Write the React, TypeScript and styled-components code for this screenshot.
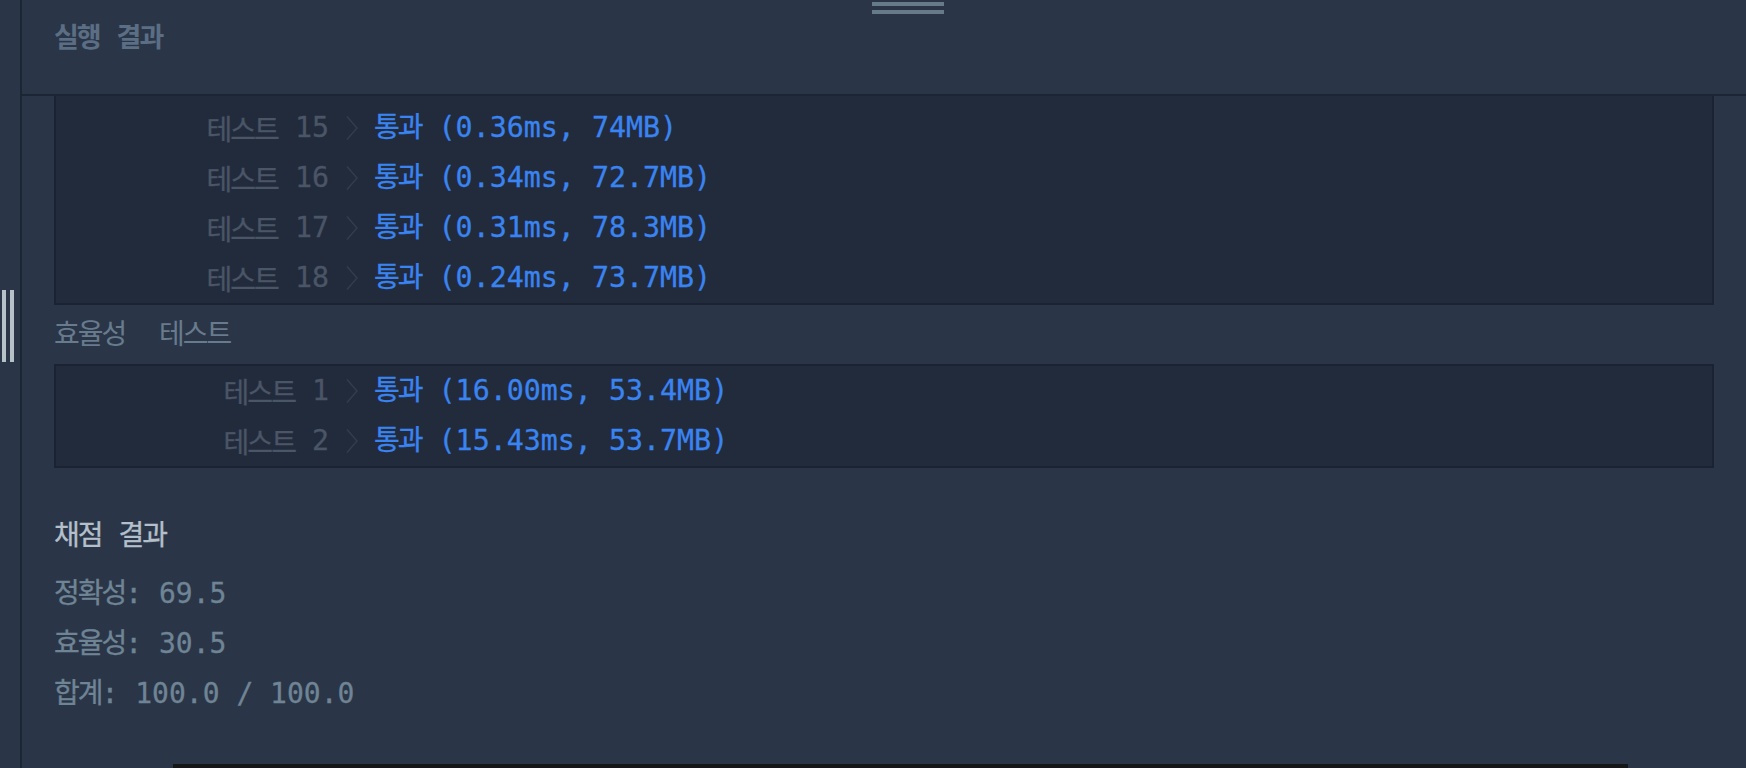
import React from 'react';
import styled, { createGlobalStyle } from 'styled-components';

const GlobalStyle = createGlobalStyle`
  html, body {
    margin: 0;
    padding: 0;
    background: #2a3647;
    overflow: hidden;
  }

  #root {
    height: 768px;
  }
`;

const MONO = `'DejaVu Sans Mono', 'Noto Sans CJK KR', monospace`;

interface TestRun {
  no: number;
  time: string;
  memory: string;
}

const accuracyRuns: TestRun[] = [
  { no: 15, time: '0.36ms', memory: '74MB' },
  { no: 16, time: '0.34ms', memory: '72.7MB' },
  { no: 17, time: '0.31ms', memory: '78.3MB' },
  { no: 18, time: '0.24ms', memory: '73.7MB' }
];

const efficiencyRuns: TestRun[] = [
  { no: 1, time: '16.00ms', memory: '53.4MB' },
  { no: 2, time: '15.43ms', memory: '53.7MB' }
];

const scores = [
  { label: '정확성', value: '69.5' },
  { label: '효율성', value: '30.5' },
  { label: '합계', value: '100.0 / 100.0' }
];

const Layout = styled.div`
  display: flex;
  height: 768px;
  overflow: hidden;
`;

const SideStrip = styled.div`
  width: 20px;
  flex: 0 0 20px;
  border-right: 2px solid #1c2534;
  background: #2a3647;
  display: flex;
  flex-direction: column;
  padding-top: 290px;
  box-sizing: content-box;
`;

const SideGrip = styled.div`
  display: flex;
  gap: 4px;
  margin-left: 2px;

  span {
    width: 4px;
    height: 72px;
    background: #b7c2c8;
  }
`;

const Panel = styled.div`
  flex: 1;
  display: flex;
  flex-direction: column;
  min-width: 0;
`;

const Header = styled.header`
  position: relative;
  box-sizing: border-box;
  height: 96px;
  flex: 0 0 96px;
  border-bottom: 2px solid #1c2534;
  padding: 13px 0 0 32px;
`;

const TopGrip = styled.div`
  position: absolute;
  left: 850px;
  top: 2px;
  display: flex;
  flex-direction: column;
  gap: 4px;

  span {
    width: 72px;
    height: 4px;
    background: #667a8a;
  }
`;

const Ko = styled.span<{ $size?: number; $track?: number }>`
  font-family: 'Noto Sans CJK KR', sans-serif;
  font-size: ${(p) => p.$size ?? 28}px;
  letter-spacing: ${(p) => p.$track ?? -2}px;
  line-height: 1;
`;

const HeaderTitle = styled.h2`
  margin: 0;
  font-family: ${MONO};
  font-size: 28px;
  line-height: 50px;
  font-weight: 700;
  color: #5b6e84;
  white-space: pre;
`;

const Content = styled.main`
  flex: 1;
  min-height: 0;
  overflow: hidden;
  padding: 0 32px;
`;

const ResultBox = styled.div<{ $clipped?: boolean }>`
  background: #222b3c;
  border: 2px solid #1b2332;
  border-top-width: ${(p) => (p.$clipped ? 0 : 2)}px;
  padding-top: ${(p) => (p.$clipped ? 7 : 0)}px;
`;

const Row = styled.div`
  display: flex;
  height: 50px;
  align-items: center;
  font-family: ${MONO};
  font-size: 28.3px;
  line-height: 50px;
  white-space: pre;
  -webkit-text-stroke: 0.3px currentColor;
`;

const RowTitle = styled.div`
  flex: 0 0 314px;
  display: flex;
  justify-content: flex-end;
  align-items: center;
  color: #4a5566;
`;

const Chevron = styled.svg`
  width: 24px;
  height: 26px;
  flex: 0 0 24px;
`;

const RowResult = styled.div`
  padding-left: 4px;
  color: #3a84f1;
`;

const SectionLabel = styled.div`
  height: 59px;
  line-height: 59px;
  font-family: ${MONO};
  font-size: 28px;
  color: #687b8e;
  white-space: pre;
`;

const Scores = styled.section`
  padding-top: 43px;
  font-family: ${MONO};
  font-size: 28px;
  white-space: pre;
  -webkit-text-stroke: 0.3px currentColor;
`;

const ScoreTitle = styled.div`
  height: 50px;
  line-height: 50px;
  margin-bottom: 8px;
  color: #b3bfca;
`;

const ScoreLine = styled.div`
  height: 50px;
  line-height: 50px;
  color: #6f8495;
`;

const BottomBar = styled.div`
  flex: 0 0 4px;
  height: 4px;
  margin-left: 151px;
  width: 1455px;
  background: #141618;
`;

function ResultRow ({ run }: { run: TestRun }): React.ReactElement {
  return (
    <Row>
      <RowTitle>
        <Ko>테스트</Ko>
        {` ${run.no} `}
        <Chevron viewBox='0 0 24 26'>
          <polyline
            fill='none'
            points='1,1.5 11,13 1,24.5'
            stroke='#323d4e'
            strokeWidth='1.4'
          />
        </Chevron>
      </RowTitle>
      <RowResult>
        <Ko>통과</Ko>
        {` (${run.time}, ${run.memory})`}
      </RowResult>
    </Row>
  );
}

export default function App (): React.ReactElement {
  return (
    <>
      <GlobalStyle />
      <Layout>
        <SideStrip>
          <SideGrip>
            <span />
            <span />
          </SideGrip>
        </SideStrip>
        <Panel>
          <Header>
            <TopGrip>
              <span />
              <span />
            </TopGrip>
            <HeaderTitle>
              <Ko $size={27}>실행</Ko>
              {' '}
              <Ko $size={27}>결과</Ko>
            </HeaderTitle>
          </Header>
          <Content>
            <ResultBox $clipped>
              {accuracyRuns.map((run) => (
                <ResultRow key={run.no} run={run} />
              ))}
            </ResultBox>
            <SectionLabel>
              <Ko>효율성</Ko>
              {'  '}
              <Ko>테스트</Ko>
            </SectionLabel>
            <ResultBox>
              {efficiencyRuns.map((run) => (
                <ResultRow key={run.no} run={run} />
              ))}
            </ResultBox>
            <Scores>
              <ScoreTitle>
                <Ko>채점</Ko>
                {' '}
                <Ko>결과</Ko>
              </ScoreTitle>
              {scores.map((s) => (
                <ScoreLine key={s.label}>
                  <Ko>{s.label}</Ko>
                  {`: ${s.value}`}
                </ScoreLine>
              ))}
            </Scores>
          </Content>
          <BottomBar />
        </Panel>
      </Layout>
    </>
  );
}
